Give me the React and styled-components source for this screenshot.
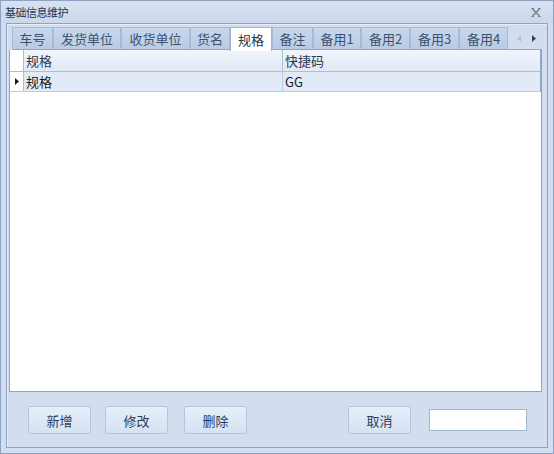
import React from "react";
import styled, { createGlobalStyle } from "styled-components";

const GlobalStyle = createGlobalStyle`
  html, body {
    margin: 0;
    padding: 0;
    background: #d2deef;
  }
  * {
    box-sizing: border-box;
  }
`;

const tabs = ["车号", "发货单位", "收货单位", "货名", "规格", "备注", "备用1", "备用2", "备用3", "备用4"];
const tabWidths = [41, 68, 69, 40, 42, 41, 48, 49, 49, 49];
const ACTIVE = 4;

const rows = [{ name: "规格", code: "GG" }];

const App = () => {
  return (
    <>
      <GlobalStyle />
      <Window>
        <TitleBar>
          <Title>基础信息维护</Title>
          <CloseIcon width="10" height="9" viewBox="0 0 10 9">
            <path
              d="M1.5 1 L8.5 8 M8.5 1 L1.5 8 M0.5 0.5 H3 M7 0.5 H9.5 M0.5 8.5 H3 M7 8.5 H9.5"
              stroke="#6f7a8a"
              strokeWidth="1.2"
              fill="none"
            />
          </CloseIcon>
        </TitleBar>
        <Panel>
          <TabControl>
            <TabStrip>
              {tabs.map((t, i) => (
                <Tab key={t} $active={i === ACTIVE} style={{ width: tabWidths[i] }}>
                  {t}
                </Tab>
              ))}
              <Arrows>
                <svg width="5" height="7" viewBox="0 0 5 7">
                  <path d="M4 0 L0 3.5 L4 7 Z" fill="#b4c0d2" />
                </svg>
                <svg width="5" height="7" viewBox="0 0 5 7">
                  <path d="M0 0 L4 3.5 L0 7 Z" fill="#2f4260" />
                </svg>
              </Arrows>
            </TabStrip>
            <TabPage>
              <Grid>
                <HeaderRow>
                  <RowHeaderCell />
                  <HeaderCell $w={259}>规格</HeaderCell>
                  <HeaderCell $last>快捷码</HeaderCell>
                </HeaderRow>
                {rows.map((r) => (
                  <DataRow key={r.code}>
                    <RowHeaderCell>
                      <svg width="4" height="7" viewBox="0 0 4 7">
                        <path d="M0 0 L4 3.5 L0 7 Z" fill="#1c1c1c" />
                      </svg>
                    </RowHeaderCell>
                    <Cell $w={259}>{r.name}</Cell>
                    <Cell $last>{r.code}</Cell>
                  </DataRow>
                ))}
              </Grid>
            </TabPage>
          </TabControl>
          <ButtonBar>
            <Button>新增</Button>
            <Button $gap={16}>修改</Button>
            <Button>删除</Button>
            <Spacer />
            <Button $gap={18}>取消</Button>
            <TextBox />
          </ButtonBar>
        </Panel>
      </Window>
    </>
  );
};

export default App;

const Window = styled.div`
  width: 554px;
  height: 454px;
  border: 1px solid #8da2c0;
  background: #d2deef;
  display: flex;
  flex-direction: column;
  font-family: "Noto Sans CJK SC", "Noto Sans", sans-serif;
`;

const TitleBar = styled.div`
  height: 22px;
  display: flex;
  align-items: center;
  justify-content: space-between;
  padding: 0 12px 0 4px;
  background: linear-gradient(to bottom, #d6e1f1, #cbd8eb);
`;

const Title = styled.span`
  font-size: 11px;
  color: #1e3556;
  letter-spacing: -0.5px;
`;

const CloseIcon = styled.svg`
  display: block;
`;

const Panel = styled.div`
  flex: 1;
  margin: 0 5px 5px 5px;
  border: 1px solid #8ea4c3;
  box-shadow: inset 1px 1px 0 #e6edf7;
  background: #d2deef;
  display: flex;
  flex-direction: column;
  padding: 3px 5px 0 2px;
`;

const TabControl = styled.div`
  display: flex;
  flex-direction: column;
  height: 365px;
`;

const TabStrip = styled.div`
  display: flex;
  align-items: flex-end;
  height: 23px;
  padding-left: 3px;
  position: relative;
  z-index: 1;
`;

const Tab = styled.div`
  height: ${(p) => (p.$active ? "24px" : "23px")};
  margin-bottom: ${(p) => (p.$active ? "-1px" : "0")};
  display: flex;
  align-items: center;
  justify-content: center;
  font-size: 13px;
  color: ${(p) => (p.$active ? "#24344c" : "#3e5270")};
  background: ${(p) =>
    p.$active ? "#ffffff" : "linear-gradient(to bottom, #c8d7ec, #b9cbe3)"};
  border: 1px solid ${(p) => (p.$active ? "#9fb3cf" : "#a8bbd6")};
  border-bottom: ${(p) => (p.$active ? "none" : "1px solid #8ea5c5")};
  padding-bottom: 1px;
`;

const Arrows = styled.div`
  flex: 1;
  height: 23px;
  display: flex;
  align-items: center;
  justify-content: center;
  gap: 10px;
  border-bottom: 1px solid #8ea5c5;
  padding-left: 4px;
`;

const TabPage = styled.div`
  flex: 1;
  border: 1px solid #8ea5c5;
  border-top: none;
  background: #ffffff;
`;

const Grid = styled.div`
  display: flex;
  flex-direction: column;
  font-size: 13px;
  color: #1a1a1a;
`;

const HeaderRow = styled.div`
  display: flex;
  height: 22px;
  background: linear-gradient(to bottom, #f1f5fb, #e1e9f5);
  border-bottom: 1px solid #a9bedb;
`;

const DataRow = styled.div`
  display: flex;
  height: 20px;
  background: #e1eaf6;
  border-bottom: 1px solid #b9cce5;
`;

const RowHeaderCell = styled.div`
  width: 14px;
  flex: none;
  display: flex;
  align-items: center;
  justify-content: center;
  border-right: 1px solid #a9bedb;
  background: #ffffff;
`;

const HeaderCell = styled.div`
  width: ${(p) => (p.$w ? `${p.$w}px` : "auto")};
  flex: ${(p) => (p.$w ? "none" : "1")};
  display: flex;
  align-items: center;
  padding-left: 2px;
  color: #2a3a52;
  border-right: 1px solid ${(p) => (p.$last ? "#8ea5c5" : "#a9bedb")};
`;

const Cell = styled.div`
  width: ${(p) => (p.$w ? `${p.$w}px` : "auto")};
  flex: ${(p) => (p.$w ? "none" : "1")};
  display: flex;
  align-items: center;
  padding-left: 2px;
  border-right: 1px solid ${(p) => (p.$last ? "#8ea5c5" : "#b9cce5")};
`;

const ButtonBar = styled.div`
  flex: 1;
  display: flex;
  align-items: flex-start;
  padding: 14px 15px 0 19px;
`;

const Button = styled.button`
  width: 63px;
  height: 28px;
  margin-right: ${(p) => (p.$gap ? `${p.$gap}px` : "14px")};
  border: 1px solid #b4c5dc;
  border-radius: 2px;
  background: linear-gradient(to bottom, #e6eef9, #d6e2f2);
  font-family: "Noto Sans CJK SC", "Noto Sans", sans-serif;
  font-size: 13px;
  color: #2b3d58;
  padding: 0;
`;

const Spacer = styled.div`
  flex: 1;
`;

const TextBox = styled.input`
  width: 98px;
  height: 22px;
  margin-top: 3px;
  border: 1px solid #a3b6d1;
  background: #ffffff;
  outline: none;
`;
